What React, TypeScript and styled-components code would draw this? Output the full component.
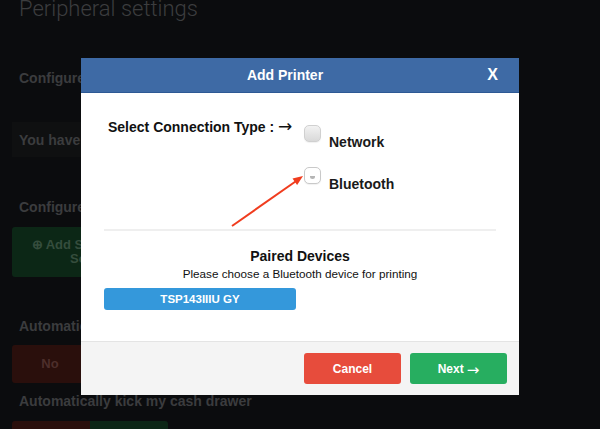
import React from "react";
import styled, { createGlobalStyle } from "styled-components";

const Global = createGlobalStyle`
  html, body { margin: 0; padding: 0; }
  body {
    background: #0b0c0e;
    width: 600px;
    height: 429px;
    overflow: hidden;
    font-family: "Liberation Sans", Arial, sans-serif;
  }
`;

const Page = styled.div`
  position: relative;
  width: 600px;
  height: 429px;
  overflow: hidden;
  background: #0b0c0e;
`;

const Content = styled.div`
  padding: 0 0 0 12px;
  display: flex;
  flex-direction: column;
  align-items: flex-start;
`;

const Title = styled.h1`
  margin: -2px 0 0 7px;
  font-family: Roboto, "Liberation Sans", sans-serif;
  font-weight: 300;
  font-size: 22px;
  line-height: 22px;
  color: #3c3d3f;
`;

const Heading = styled.h3<{ $mt: number }>`
  margin: ${(p) => p.$mt}px 0 0 7px;
  font-size: 14px;
  line-height: 17px;
  font-weight: 700;
  color: #3b3c3e;
  white-space: nowrap;
`;

const Notice = styled.div`
  margin-top: 35.5px;
  width: 420px;
  height: 35px;
  box-sizing: border-box;
  padding-left: 7px;
  display: flex;
  align-items: center;
  background: #0f1011;
  font-size: 14px;
  font-weight: 700;
  color: #3b3c3e;
`;

const AddButton = styled.div`
  margin-top: 11.5px;
  width: 150px;
  height: 50px;
  border-radius: 3px;
  background: #0c2716;
  color: #354d3d;
  font-size: 13px;
  font-weight: 700;
  line-height: 14px;
  display: flex;
  flex-direction: column;
  align-items: center;
  justify-content: center;
  text-align: center;
`;

const Segments = styled.div<{ $mt: number }>`
  margin-top: ${(p) => p.$mt}px;
  display: flex;
`;

const Segment = styled.div<{ $tone: "red" | "green"; $w: number }>`
  width: ${(p) => p.$w}px;
  height: 38px;
  background: ${(p) => (p.$tone === "red" ? "#2a0f0c" : "#0c2616")};
  color: ${(p) => (p.$tone === "red" ? "#4d2e2b" : "#2f4a38")};
  font-size: 13px;
  font-weight: 700;
  display: flex;
  align-items: center;
  justify-content: center;
  border-radius: ${(p) => (p.$tone === "red" ? "3px 0 0 3px" : "0 3px 3px 0")};
`;

const Overlay = styled.div`
  position: absolute;
  inset: 0;
  display: flex;
  justify-content: center;
  align-items: flex-start;
  padding-top: 58px;
`;

const Modal = styled.div`
  position: relative;
  width: 438px;
  background: #fff;
  display: flex;
  flex-direction: column;
`;

const Header = styled.div`
  height: 35px;
  box-sizing: border-box;
  background: #3e6aa5;
  border-bottom: 1px solid #2d5994;
  display: flex;
  align-items: center;
  padding: 0 20px;
  color: #fff;
`;

const HeaderTitle = styled.div`
  flex: 1;
  text-align: center;
  font-size: 14px;
  font-weight: 700;
`;

const Close = styled.div`
  width: 29px;
  text-align: right;
  font-size: 16px;
  font-weight: 700;
  padding-right: 1px;
`;

const Body = styled.div`
  padding: 26px 23px 31px;
  display: flex;
  flex-direction: column;
`;

const ConnectionRow = styled.div`
  display: flex;
  padding-left: 4px;
`;

const ConnLabel = styled.div`
  width: 196px;
  font-size: 14px;
  line-height: 17px;
  font-weight: 700;
  color: #111;
  white-space: nowrap;
`;

const ArrowGlyph = styled.span<{ $size: number }>`
  font-family: "Noto Sans", "DejaVu Sans", sans-serif;
  font-weight: 400;
  font-size: ${(p) => p.$size}px;
  line-height: 0;
`;

const Options = styled.div`
  margin-top: 6px;
  display: flex;
  flex-direction: column;
  gap: 16px;
`;

const Option = styled.div`
  display: flex;
  gap: 8px;
`;

const Check = styled.div<{ $pressed?: boolean }>`
  position: relative;
  width: 17px;
  height: 17px;
  box-sizing: border-box;
  border-radius: 5px;
  border: 1px solid ${(p) => (p.$pressed ? "#d0d0d0" : "#c9c9c9")};
  background: ${(p) =>
    p.$pressed ? "linear-gradient(#f2f2f2, #d9d9d9)" : "#ffffff"};
  box-shadow: 0 1px 1px rgba(0, 0, 0, 0.06);
`;

const CheckMark = styled.span`
  position: absolute;
  left: 5px;
  top: 8px;
  width: 5px;
  height: 3px;
  border-radius: 0 0 3px 3px;
  background: #b5b5b5;
`;

const OptLabel = styled.div`
  margin-top: 9px;
  font-size: 14px;
  line-height: 17px;
  font-weight: 700;
  color: #1a1a1a;
`;

const Rule = styled.div`
  margin-top: 36px;
  height: 2px;
  background: #efefef;
`;

const Paired = styled.div`
  margin-top: 16.5px;
  text-align: center;
  font-size: 14px;
  line-height: 17px;
  font-weight: 700;
  color: #111;
`;

const Sub = styled.div`
  margin-top: 1px;
  text-align: center;
  font-size: 11.7px;
  line-height: 15px;
  color: #111;
`;

const DeviceButton = styled.div`
  margin-top: 7.5px;
  width: 192px;
  height: 22px;
  border-radius: 3px;
  background: #3498db;
  color: #fff;
  font-size: 11.5px;
  font-weight: 700;
  display: flex;
  align-items: center;
  justify-content: center;
`;

const Footer = styled.div`
  border-top: 1px solid #e4e4e4;
  background: #f4f4f4;
  padding: 11px 12px;
  display: flex;
  justify-content: flex-end;
  gap: 9px;
`;

const FooterButton = styled.div<{ $tone: "red" | "green" }>`
  width: 97px;
  height: 31px;
  border-radius: 3px;
  background: ${(p) => (p.$tone === "red" ? "#e74c3c" : "#27ae60")};
  color: #fff;
  font-size: 12px;
  font-weight: 700;
  display: flex;
  align-items: center;
  justify-content: center;
  gap: 3px;
`;

const ArrowSvg = styled.svg`
  position: absolute;
  left: 0;
  top: 0;
  pointer-events: none;
`;

export default function App() {
  return (
    <Page>
      <Global />
      <Content>
        <Title>Peripheral settings</Title>
        <Heading $mt={49.5}>Configure my printer</Heading>
        <Notice>You have no printer configured</Notice>
        <Heading $mt={41.5}>Configure my scanner and scale</Heading>
        <AddButton>
          <span>⊕ Add Scanner or</span>
          <span>Scale</span>
        </AddButton>
        <Heading $mt={40.5}>Automatically print receipts</Heading>
        <Segments $mt={10}>
          <Segment $tone="red" $w={76}>No</Segment>
          <Segment $tone="green" $w={76}>Yes</Segment>
        </Segments>
        <Heading $mt={10.5}>Automatically kick my cash drawer</Heading>
        <Segments $mt={10.5}>
          <Segment $tone="red" $w={78}>No</Segment>
          <Segment $tone="green" $w={78}>Yes</Segment>
        </Segments>
      </Content>

      <Overlay>
        <Modal>
          <Header>
            <HeaderTitle>Add Printer</HeaderTitle>
            <Close>X</Close>
          </Header>
          <Body>
            <ConnectionRow>
              <ConnLabel>
                Select Connection Type : <ArrowGlyph $size={17}>→</ArrowGlyph>
              </ConnLabel>
              <Options>
                <Option>
                  <Check $pressed />
                  <OptLabel>Network</OptLabel>
                </Option>
                <Option>
                  <Check>
                    <CheckMark />
                  </Check>
                  <OptLabel>Bluetooth</OptLabel>
                </Option>
              </Options>
            </ConnectionRow>
            <Rule />
            <Paired>Paired Devices</Paired>
            <Sub>Please choose a Bluetooth device for printing</Sub>
            <DeviceButton>TSP143IIIU GY</DeviceButton>
          </Body>
          <Footer>
            <FooterButton $tone="red">Cancel</FooterButton>
            <FooterButton $tone="green">
              Next <ArrowGlyph $size={15}>→</ArrowGlyph>
            </FooterButton>
          </Footer>
          <ArrowSvg width="438" height="337" viewBox="0 0 438 337">
            <line x1="151" y1="168" x2="214.5" y2="123.5" stroke="#f03c1e" strokeWidth="2" />
            <polygon points="222,118 216.1,127.1 211.5,120.5" fill="#f03c1e" />
          </ArrowSvg>
        </Modal>
      </Overlay>
    </Page>
  );
}
